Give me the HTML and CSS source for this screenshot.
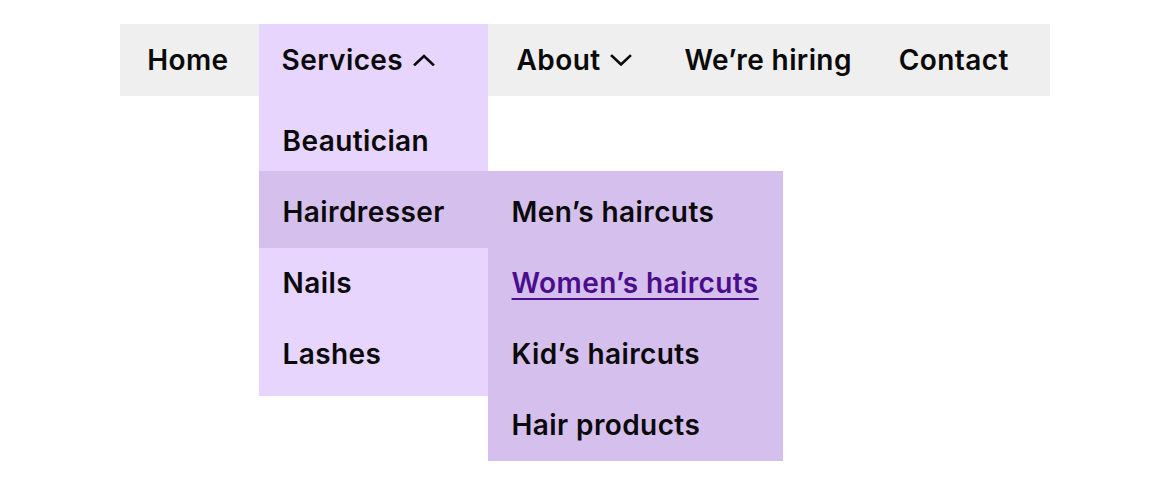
FILE: index.html
```html
<!DOCTYPE html>
<html lang="en">
  <head>
    <meta charset="UTF-8" />
    <meta name="viewport" content="width=device-width, initial-scale=1.0" />
    <title>Salon Navigation</title>
    <link rel="stylesheet" href="styles.css">
  </head>
  <body>
    <nav class="site-nav">
      <ul class="menu">
        <li class="menu-item home"><a href="#">Home</a></li>

        <li class="menu-item services is-open">
          <button aria-haspopup="true" aria-expanded="true" id="services-button">
            Services
            <svg class="chevron" width="22" height="12" viewBox="0 0 22 12" aria-hidden="true">
              <path d="M2 10.5 L11 2 L20 10.5" />
            </svg>
          </button>
          <ul class="dropdown" aria-labelledby="services-button">
            <li><a href="#">Beautician</a></li>
            <li class="has-submenu is-active">
              <a href="#">Hairdresser</a>
              <ul class="submenu">
                <li><a href="#">Men’s haircuts</a></li>
                <li><a href="#" class="current">Women’s haircuts</a></li>
                <li><a href="#">Kid’s haircuts</a></li>
                <li><a href="#">Hair products</a></li>
              </ul>
            </li>
            <li><a href="#">Nails</a></li>
            <li><a href="#">Lashes</a></li>
          </ul>
        </li>

        <li class="menu-item about">
          <button aria-haspopup="true" aria-expanded="false" id="about-button">
            About
            <svg class="chevron" width="22" height="12" viewBox="0 0 22 12" aria-hidden="true">
              <path d="M2 2 L11 10.5 L20 2" />
            </svg>
          </button>
        </li>

        <li class="menu-item hiring"><a href="#">We’re hiring</a></li>
        <li class="menu-item contact"><a href="#">Contact</a></li>
      </ul>
    </nav>
  </body>
</html>
```

FILE: styles.css
```css
html,
body {
  height: 100%;
}

body {
  margin: 0;
  padding-top: 24px;
  box-sizing: border-box;
  background: #fff;
  font-family: Inter, "Noto Sans", sans-serif;
  color: #0a0a0a;
}

.site-nav {
  display: flex;
  justify-content: center;
}

ul {
  list-style: none;
  margin: 0;
  padding: 0;
}

.menu {
  display: flex;
  align-items: flex-start;
  background-color: #efefef;
}

.menu-item {
  position: relative;
}

a,
button {
  font-family: inherit;
  font-size: 28px;
  font-weight: 600;
  letter-spacing: 0.4px;
  color: inherit;
  text-decoration: none;
}

.menu-item > a,
.menu-item > button {
  display: flex;
  align-items: center;
  gap: 10px;
  height: 72px;
  padding: 0 26px;
  background: none;
  border: none;
  cursor: pointer;
}

.home > a {
  padding: 0 30px 0 27px;
}

.services {
  width: 229px;
  background-color: #e7d5fe;
}

.services > button {
  padding-left: 23px;
}

.about > button {
  padding-left: 29px;
}

.hiring > a {
  padding-right: 24px;
}

.contact > a {
  padding-left: 23px;
  padding-right: 41px;
}

.chevron {
  fill: none;
  stroke: #0a0a0a;
  stroke-width: 2.6;
  stroke-linecap: square;
}

.dropdown {
  position: absolute;
  top: 72px;
  left: 0;
  width: 229px;
  padding: 10px 0 6px;
  background-color: #e7d5fe;
  z-index: 10;
}

.dropdown a {
  display: block;
  height: 71px;
  line-height: 71px;
  padding: 0 24px;
  white-space: nowrap;
}

.has-submenu {
  position: relative;
  margin-top: -6px;
  padding-top: 6px;
}

.has-submenu.is-active {
  background-color: #d5bfed;
}

.submenu {
  position: absolute;
  top: 0;
  left: 100%;
  width: 295px;
  padding-top: 6px;
  height: 290px;
  box-sizing: border-box;
  background-color: #d5bfed;
}

.submenu a.current {
  color: #4b0d8c;
  text-decoration: underline;
  text-decoration-thickness: 2px;
  text-underline-offset: 5px;
}
```
